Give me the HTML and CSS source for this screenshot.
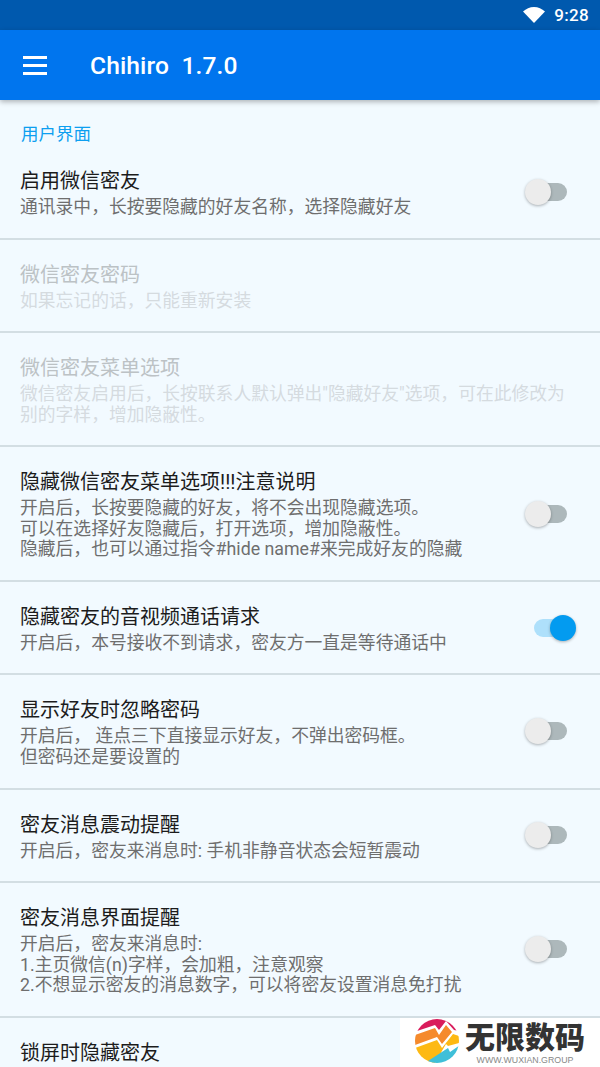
FILE: index.html
```html
<!DOCTYPE html>
<html lang="zh-CN">
<head>
<meta charset="utf-8">
<title>Chihiro</title>
<link rel="stylesheet" href="styles.css">
</head>
<body>
<div class="status">
  <svg class="wifi" viewBox="0 0 22 16"><path d="M0 4.5C3 1.8 6.8 0 11 0s8 1.8 11 4.5L11 16z"/></svg>
  <span class="time">9:28</span>
</div>
<header class="appbar">
  <div class="burger"><i></i><i></i><i></i></div>
  <h1 class="apptitle">Chihiro  1.7.0</h1>
</header>
<main class="list">
  <div class="category">用户界面</div>
  <div class="row">
    <div class="text"><div class="title">启用微信密友</div><div class="sum">通讯录中，长按要隐藏的好友名称，选择隐藏好友</div></div>
    <div class="switch"><span class="track"></span><span class="thumb"></span></div>
  </div>
  <div class="row disabled">
    <div class="text"><div class="title">微信密友密码</div><div class="sum">如果忘记的话，只能重新安装</div></div>
  </div>
  <div class="row disabled">
    <div class="text"><div class="title">微信密友菜单选项</div><div class="sum">微信密友启用后，长按联系人默认弹出"隐藏好友"选项，可在此修改为<br>别的字样，增加隐蔽性。</div></div>
  </div>
  <div class="row">
    <div class="text"><div class="title">隐藏微信密友菜单选项!!!注意说明</div><div class="sum">开启后，长按要隐藏的好友，将不会出现隐藏选项。<br>可以在选择好友隐藏后，打开选项，增加隐蔽性。<br>隐藏后，也可以通过指令#hide name#来完成好友的隐藏</div></div>
    <div class="switch"><span class="track"></span><span class="thumb"></span></div>
  </div>
  <div class="row">
    <div class="text"><div class="title">隐藏密友的音视频通话请求</div><div class="sum">开启后，本号接收不到请求，密友方一直是等待通话中</div></div>
    <div class="switch on"><span class="track"></span><span class="thumb"></span></div>
  </div>
  <div class="row">
    <div class="text"><div class="title">显示好友时忽略密码</div><div class="sum">开启后， 连点三下直接显示好友，不弹出密码框。<br>但密码还是要设置的</div></div>
    <div class="switch"><span class="track"></span><span class="thumb"></span></div>
  </div>
  <div class="row">
    <div class="text"><div class="title">密友消息震动提醒</div><div class="sum">开启后，密友来消息时: 手机非静音状态会短暂震动</div></div>
    <div class="switch"><span class="track"></span><span class="thumb"></span></div>
  </div>
  <div class="row">
    <div class="text"><div class="title">密友消息界面提醒</div><div class="sum">开启后，密友来消息时:<br>1.主页微信(n)字样，会加粗，注意观察<br>2.不想显示密友的消息数字，可以将密友设置消息免打扰</div></div>
    <div class="switch"><span class="track"></span><span class="thumb"></span></div>
  </div>
  <div class="row last">
    <div class="text"><div class="title">锁屏时隐藏密友</div></div>
  </div>
</main>
<aside class="mark">
  <svg class="marklogo" viewBox="0 0 44 44">
    <defs><clipPath id="disc"><circle cx="22" cy="22" r="22"/></clipPath></defs>
    <g clip-path="url(#disc)">
      <polygon points="0,0 44,0 44,12 39,11 31,2 24,11 20,6 2,12" fill="#d91c5c"/>
      <polygon points="0,16 20,9 24,16 31,6 37,13 27,25 22,18 0,26" fill="#f58a2c"/>
      <polygon points="0,29 22,21 27,29 38,15 44,17 44,24 33,27 31,25 20,44 0,44" fill="#fdb913"/>
      <polygon points="13,42 33,29 35,33 45,26 44,44 13,44" fill="#3fbfd8"/>
    </g>
  </svg>
  <div class="marktext">
    <div class="markname">无限数码</div>
    <div class="markurl">WWW.WUXIAN.GROUP</div>
  </div>
</aside>
</body>
</html>
```
FILE: styles.css
```css
html, body {
  margin: 0;
  padding: 0;
}
body {
  position: relative;
  width: 600px;
  height: 1067px;
  overflow: hidden;
  background: #f2faff;
  font-family: Roboto, "Noto Sans CJK SC", sans-serif;
}
.status {
  height: 30px;
  background: #0059ae;
  display: flex;
  align-items: center;
  justify-content: flex-end;
  padding-right: 11px;
  box-sizing: border-box;
  color: #fff;
}
.wifi {
  width: 22px;
  height: 16px;
  fill: #fff;
  margin-right: 9px;
}
.time {
  font-size: 17px;
  font-weight: 500;
  letter-spacing: 0.3px;
}
.appbar {
  position: relative;
  height: 70px;
  background: #0075ee;
  display: flex;
  align-items: center;
  box-shadow: 0 2px 5px rgba(0, 0, 0, 0.28);
  color: #fff;
}
.burger {
  width: 24px;
  margin-left: 23px;
  margin-right: 43px;
  display: flex;
  flex-direction: column;
  gap: 5px;
}
.burger i {
  display: block;
  height: 3px;
  background: #fff;
}
.apptitle {
  margin: 0;
  font-size: 24.6px;
  font-weight: 500;
  white-space: pre;
  line-height: 32px;
  margin-top: 2px;
  letter-spacing: 0.1px;
}
.category {
  height: 46px;
  box-sizing: border-box;
  padding: 22px 0 0 21px;
  font-size: 17.5px;
  line-height: 24px;
  color: #0d9ff0;
}
.row {
  display: flex;
  align-items: center;
  padding: 22px 24px 20.1px 20px;
  border-bottom: 2px solid #d3dee3;
  box-sizing: border-box;
}
.row.last {
  border-bottom: 0;
}
.text {
  flex: 1;
  min-width: 0;
}
.title {
  font-size: 20px;
  line-height: 26px;
  color: #1c1c1c;
  margin-bottom: 3px;
}
.sum {
  font-size: 17.8px;
  line-height: 20.5px;
  color: #6e6e6e;
  white-space: nowrap;
}
.disabled .title {
  color: #bcc2c5;
}
.disabled .sum {
  color: #d5dbdf;
}
.switch {
  position: relative;
  flex: none;
  width: 51px;
  height: 26px;
  margin-top: -2px;
}
.track {
  position: absolute;
  left: 8px;
  top: 4px;
  width: 34px;
  height: 18px;
  border-radius: 9px;
  background: #adb8bb;
}
.thumb {
  position: absolute;
  left: 0;
  top: 0;
  width: 26px;
  height: 26px;
  border-radius: 50%;
  background: #ececec;
  box-shadow: 0 1px 3px rgba(0, 0, 0, 0.3);
}
.switch.on .track {
  left: 9px;
  width: 36px;
  background: #aee0fb;
}
.switch.on .thumb {
  left: 25px;
  background: #039bf0;
}
.mark {
  position: absolute;
  left: 400px;
  top: 1018px;
  width: 200px;
  height: 49px;
  background: #fff;
  display: flex;
  align-items: flex-start;
  gap: 6px;
  padding: 1px 0 0 15px;
  box-sizing: border-box;
}
.marklogo {
  width: 44px;
  height: 44px;
  flex: none;
}
.marktext {
  display: flex;
  flex-direction: column;
  align-items: center;
}
.markname {
  font-family: "Noto Sans CJK SC", sans-serif;
  font-weight: 900;
  font-size: 30px;
  line-height: 32px;
  color: #333;
  white-space: nowrap;
}
.markurl {
  font-family: "Liberation Sans", sans-serif;
  font-size: 8.8px;
  line-height: 11px;
  color: #888;
  white-space: nowrap;
  margin-top: 4px;
}
```
